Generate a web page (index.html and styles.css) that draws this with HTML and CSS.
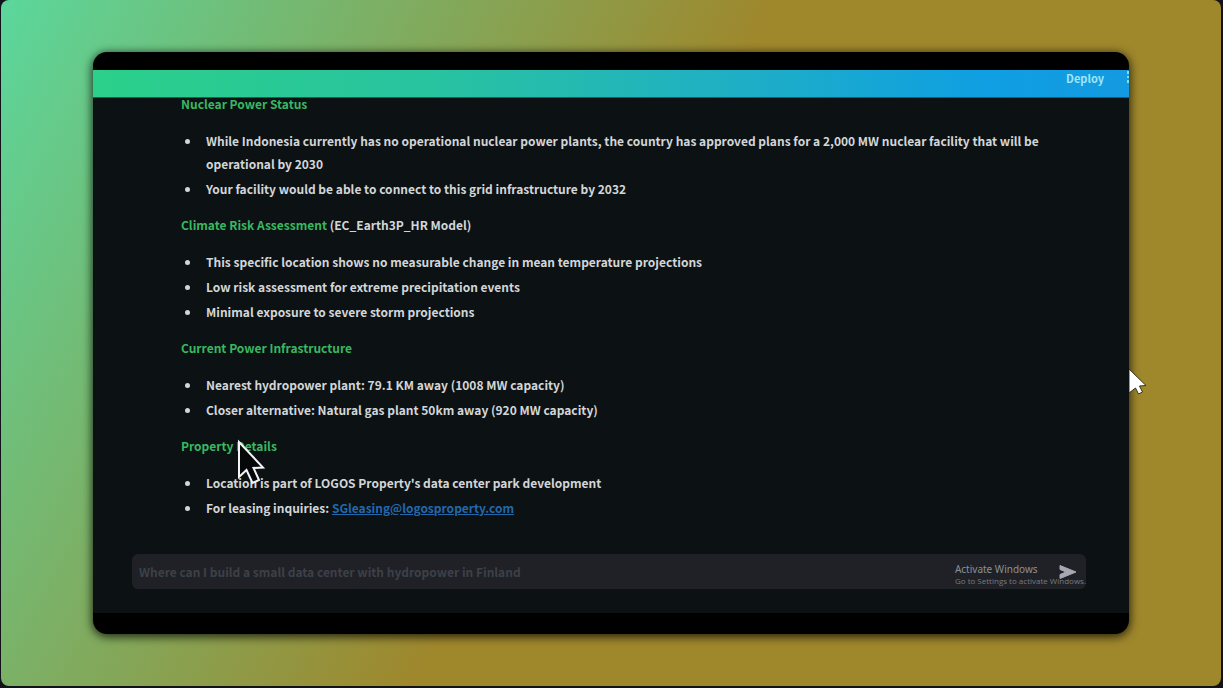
FILE: index.html
```html
<!DOCTYPE html>
<html lang="en">
<head>
<meta charset="utf-8">
<title>Data center site report</title>
<link rel="stylesheet" href="styles.css">
</head>
<body>
<main class="stage">
  <section class="frame">
    <header class="topbar">
      <button class="deploy" type="button">Deploy</button>
      <button class="menu" type="button" aria-label="Menu">
        <svg width="4" height="14" viewBox="0 0 4 14"><path d="M2 1h2v3H2zM2 6h2v2H2zM2 10h2v3H2z" fill="#7fe0f5"/></svg>
      </button>
    </header>
    <div class="content">
      <article class="report">
        <h2>Nuclear Power Status</h2>
        <ul>
          <li>While Indonesia currently has no operational nuclear power plants, the country has approved plans for a 2,000 MW nuclear facility that will be operational by 2030</li>
          <li>Your facility would be able to connect to this grid infrastructure by 2032</li>
        </ul>
        <h2>Climate Risk Assessment <span class="note">(EC_Earth3P_HR Model)</span></h2>
        <ul>
          <li>This specific location shows no measurable change in mean temperature projections</li>
          <li>Low risk assessment for extreme precipitation events</li>
          <li>Minimal exposure to severe storm projections</li>
        </ul>
        <h2>Current Power Infrastructure</h2>
        <ul>
          <li>Nearest hydropower plant: 79.1 KM away (1008 MW capacity)</li>
          <li>Closer alternative: Natural gas plant 50km away (920 MW capacity)</li>
        </ul>
        <h2 class="pointed">Property Details
          <svg class="pointer" width="30" height="48" viewBox="0 0 30 48"><path d="M2 3V38L9.500 31L15.500 44L22 41L16.500 29L26 28.500Z" fill="#050708" stroke="#f4f4f4" stroke-width="2"/></svg>
        </h2>
        <ul>
          <li>Location is part of LOGOS Property's data center park development</li>
          <li>For leasing inquiries: <a href="mailto:SGleasing@logosproperty.com">SGleasing@logosproperty.com</a></li>
        </ul>
      </article>
      <form class="chat">
        <input type="text" aria-label="Chat message" placeholder="Where can I build a small data center with hydropower in Finland">
        <button class="send" type="button" aria-label="Send">
          <svg width="18" height="16" viewBox="0 0 18 16"><path d="M1 1.500L17 8L1 14.500V10.500L7 8L1 5.500Z" fill="#a6a8b2" stroke="#a6a8b2" stroke-width="1" stroke-linejoin="round"/></svg>
        </button>
        <div class="watermark">
          <p class="watermark-title">Activate Windows</p>
          <p class="watermark-text">Go to Settings to activate Windows.</p>
        </div>
      </form>
    </div>
  </section>
  <svg class="cursor" width="18" height="28" viewBox="0 0 18 28"><path d="M0 1L17 17.500L10.500 18L13.500 24L9.500 26L6.500 20L0 25Z" fill="#fff" stroke="#3a331c" stroke-width="1"/></svg>
</main>
</body>
</html>
```

FILE: styles.css
```css
* {
  box-sizing: border-box;
}

body {
  margin: 0;
  min-height: 100vh;
  display: flex;
  padding: 0 2px 2px 1px;
  background: #121318;
  color: #d3d6d8;
  font: 700 12px/23px "Noto Sans CJK SC", "Noto Sans", sans-serif;
}

button,
input {
  border: 0;
  padding: 0;
  background: none;
  color: inherit;
  font: inherit;
}

.stage {
  position: relative;
  flex: 1;
  display: flex;
  padding: 52px 92px;
  border-radius: 8px;
  background: linear-gradient(118deg, #5bd79c, #9f872c 49%);
}

.frame {
  flex: 1;
  min-width: 0;
  display: flex;
  flex-direction: column;
  padding: 18px 0 21px;
  border-radius: 14px;
  background: #000;
  box-shadow: 0 2px 10px 1px rgba(0, 0, 0, 0.75);
}

.topbar {
  display: flex;
  justify-content: flex-end;
  align-items: flex-start;
  gap: 21px;
  height: 28px;
  background: linear-gradient(90deg, #2bd08a, #28c3a0 33%, #1fafc5 62%, #0f9fe2 86%, #149ae0);
  border-bottom: 1px solid #156070;
}

.deploy {
  height: 16px;
  font-size: 11px;
  line-height: 16px;
  color: #a0e6f8;
}

.menu {
  display: flex;
}

.content {
  flex: 1;
  display: flex;
  flex-direction: column;
  justify-content: space-between;
  padding: 0 43px 24px 39px;
  background: #0c1114;
}

.report {
  margin-top: -6px;
  padding: 0 45px 0 49px;
}

.report h2 {
  margin: 0 0 14px;
  font: inherit;
  color: #38b860;
}

.report .note {
  color: #d3d6d8;
}

.report ul {
  display: flex;
  flex-direction: column;
  gap: 2px;
  margin: 0 0 13px;
  padding-left: 20px;
}

.report li {
  padding-left: 5px;
}

.report a {
  color: #2268ac;
}

.pointed {
  position: relative;
}

.pointer {
  position: absolute;
  left: 56px;
  top: 5px;
}

.chat {
  position: relative;
  display: flex;
  align-items: center;
  height: 35px;
  padding: 0 9px 0 7px;
  border-radius: 6px;
  background: #1f2127;
}

.chat input {
  flex: 1;
  min-width: 0;
}

.chat input::placeholder {
  color: #3d4047;
  opacity: 1;
}

.send {
  display: flex;
}

.watermark {
  position: absolute;
  right: 0;
  top: 8px;
  color: #8d9093;
  font-family: "Noto Sans", sans-serif;
  font-weight: 400;
  white-space: nowrap;
}

.watermark p {
  margin: 0;
}

.watermark-title {
  font-size: 10px;
  line-height: 14px;
}

.watermark .watermark-text {
  color: #787b7e;
  font-family: "Open Sans", sans-serif;
  font-size: 8px;
  line-height: 10px;
}

.cursor {
  position: absolute;
  right: 74px;
  top: 368px;
}
```
